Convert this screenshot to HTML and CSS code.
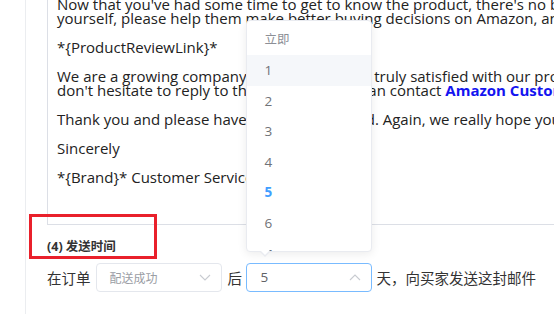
FILE: index.html
```html
<!DOCTYPE html>
<html lang="zh-CN">
<head>
  <meta charset="UTF-8" />
  <title>邮件模板 - 发送时间</title>
  <link rel="stylesheet" href="styles.css">
</head>
<body>

  <div class="page">
    <div class="editor">
      <p>Now that you've had some time to get to know the product, there's no better way to share the experience<br>yourself, please help them make better buying decisions on Amazon, and leave a review</p>
      <p>*{ProductReviewLink}*</p>
      <p>We are a growing company and we hope you truly satisfied with our products, if you have any problems<br>don't hesitate to reply to this e-mail, or you can contact <b class="link">Amazon Customer Service</b>.</p>
      <p>Thank you and please have a restful weekend. Again, we really hope you enjoy it.</p>
      <p>Sincerely</p>
      <p>*{Brand}* Customer Service</p>
    </div>

    <div class="section">
      <h4 class="section-title">(4) 发送时间</h4>
      <div class="mark"></div>
    </div>

    <div class="send-row">
      <span>在订单</span>
      <div class="select select-status">
        <span class="placeholder">配送成功</span>
        <svg class="chevron" width="12" height="7" viewBox="0 0 12 7"><polyline points="1,1 6,6 11,1" /></svg>
      </div>
      <span>后</span>
      <div class="select select-days is-focus">
        <span class="value">5</span>
        <svg class="chevron" width="12" height="7" viewBox="0 0 12 7"><polyline points="1,6 6,1 11,6" /></svg>

        <div class="dropdown">
          <ul class="options">
            <li class="muted">立即</li>
            <li class="hover">1</li>
            <li>2</li>
            <li>3</li>
            <li>4</li>
            <li class="selected">5</li>
            <li>6</li>
            <li>7</li>
          </ul>
          <span class="arrow"></span>
        </div>
      </div>
      <span>天，向买家发送这封邮件</span>
    </div>
  </div>

</body>
</html>
```

FILE: styles.css
```css
html, body {
  margin: 0;
  padding: 0;
  overflow: hidden;
  height: 100%;
  background: #fff;
}

body {
  font-family: "Open Sans", "Noto Sans CJK SC", sans-serif;
  color: #303133;
}

.page {
  margin-left: 25px;
  border-left: 1px solid #ebedf0;
  height: 100%;
  padding-left: 21px;
}

/* editor area, scrolled so the top is cut */
.editor {
  width: 760px;
  margin-top: -3.5px;
  padding: 0 0 40px 9px;
  border: 1px solid #dcdfe6;
  border-top: none;
  color: #222;
  font-size: 15px;
  line-height: 14px;
}

.editor p {
  margin: 0 0 15px;
  white-space: nowrap;
}

.editor p:last-child {
  margin-bottom: 0;
}

.link {
  color: #1414f0;
}

.section {
  position: relative;
  margin-top: 14px;
}

.section-title {
  margin: 0;
  font-size: 12.5px;
  line-height: 16px;
  font-weight: bold;
  color: #333;
}

.mark {
  position: absolute;
  left: -18px;
  top: -24.5px;
  width: 128px;
  height: 45px;
  box-sizing: border-box;
  border: 3px solid #e9202b;
}

.send-row {
  display: flex;
  align-items: center;
  margin-top: 8px;
  font-family: "Noto Sans CJK SC", sans-serif;
  font-size: 14.5px;
  color: #333;
}

.select {
  position: relative;
  display: flex;
  align-items: center;
  justify-content: space-between;
  box-sizing: border-box;
  width: 126px;
  height: 29px;
  padding: 0 10px 0 13px;
  border: 1px solid #e4e7ed;
  border-radius: 4px;
  background: #fff;
}

.select-status {
  margin: 0 6px 0 5px;
}

.select-days {
  margin: 0 5px 0 3.5px;
  padding-left: 14px;
}

.select.is-focus {
  border-color: #79bbff;
}

.placeholder {
  font-size: 12px;
  color: #9a9da4;
}

.value {
  font-family: "Open Sans", sans-serif;
  font-size: 13.5px;
  color: #606266;
}

.chevron polyline {
  fill: none;
  stroke: #c8cbd1;
  stroke-width: 1.1;
}

.dropdown {
  position: absolute;
  left: -1px;
  bottom: calc(100% + 12px);
  width: 126px;
  height: 232px;
  box-sizing: border-box;
  border: 1px solid #e9ebf0;
  border-radius: 4px;
  background: #fff;
  box-shadow: 0 2px 10px rgba(0, 0, 0, 0.08);
  z-index: 5;
}

.options {
  list-style: none;
  margin: 0;
  padding: 4px 0;
  height: 100%;
  box-sizing: border-box;
  overflow: hidden;
}

.options li {
  height: 30.6px;
  line-height: 30.6px;
  padding-left: 18px;
  font-family: "Open Sans", "Noto Sans CJK SC", sans-serif;
  font-size: 13.5px;
  color: #707277;
}

.options li.muted {
  font-size: 12.5px;
  color: #8c8f96;
}

.options li.hover {
  background: #f5f7fa;
}

.options li.selected {
  color: #409eff;
  font-weight: bold;
}

.arrow {
  position: absolute;
  left: 12px;
  bottom: -6px;
  width: 0;
  height: 0;
  border-left: 6px solid transparent;
  border-right: 6px solid transparent;
  border-top: 6px solid #e9ebf0;
}

.arrow::after {
  content: "";
  position: absolute;
  left: -5px;
  top: -7px;
  border-left: 5px solid transparent;
  border-right: 5px solid transparent;
  border-top: 5px solid #fff;
}
```
